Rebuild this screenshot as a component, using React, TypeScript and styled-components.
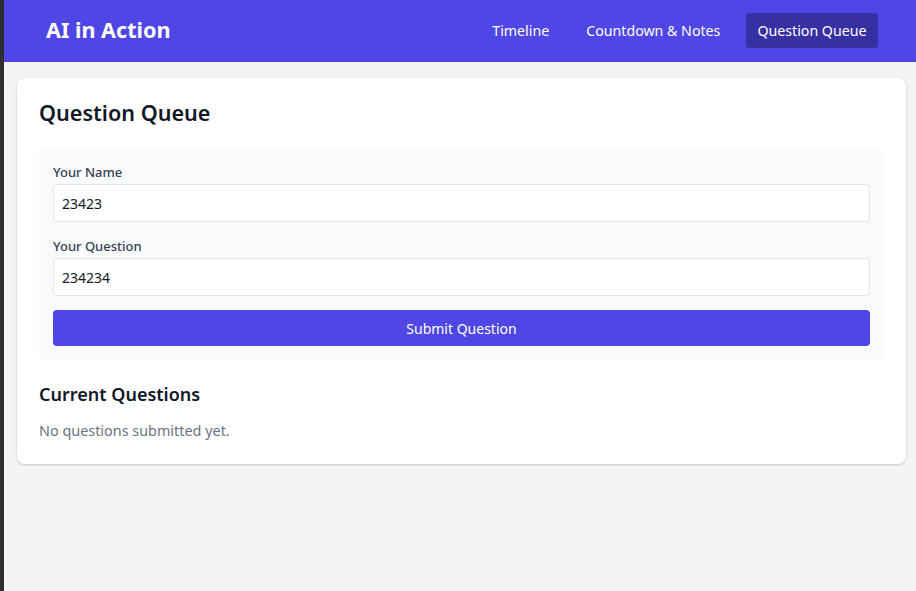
import styled, { createGlobalStyle } from 'styled-components'

const GlobalStyle = createGlobalStyle`
  html, body {
    margin: 0;
    padding: 0;
    height: 100%;
  }
  body {
    font-family: "Noto Sans", "Open Sans", sans-serif;
    background: #f3f4f6;
    border-left: 4px solid #2e2e2e;
    box-sizing: border-box;
  }
  * {
    box-sizing: border-box;
  }
`

const Header = styled.header`
  height: 62px;
  background: #4f46e5;
  display: flex;
  align-items: center;
  justify-content: space-between;
  padding: 0 38px 2px 42px;
`

const Brand = styled.h1`
  margin: 0 0 1px;
  color: #fff;
  font-size: 21.6px;
  font-weight: 700;
  line-height: 30px;
`

const Nav = styled.nav`
  display: flex;
  align-items: center;
  gap: 14px;
`

const NavItem = styled.button<{ $active?: boolean }>`
  border: none;
  font-family: inherit;
  font-size: 14.2px;
  color: #fff;
  padding: 0 11.5px;
  height: 35px;
  border-radius: 4px;
  background: ${({ $active }) => ($active ? '#3730a3' : 'transparent')};
  cursor: pointer;
`

const Main = styled.main`
  padding: 16px 10px 0 13px;
`

const Card = styled.section`
  background: #fff;
  border-radius: 8px;
  box-shadow: 0 1px 3px rgba(0, 0, 0, 0.12), 0 1px 2px rgba(0, 0, 0, 0.08);
  padding: 20px 22px 23px;
`

const Title = styled.h2`
  margin: 0 0 20px;
  font-size: 21.6px;
  font-weight: 600;
  color: #111827;
  line-height: 30px;
`

const Form = styled.form`
  background: #f9fafb;
  border-radius: 8px;
  padding: 15px 14px 14px;
  display: flex;
  flex-direction: column;
`

const Field = styled.div`
  display: flex;
  flex-direction: column;
  margin-bottom: 14px;

  &:first-child {
    margin-bottom: 15px;
  }
`

const Label = styled.label`
  font-size: 13px;
  font-weight: 500;
  color: #374151;
  line-height: 18px;
  margin-bottom: 3px;
`

const Input = styled.input`
  height: 38px;
  border: 1px solid #e5e7eb;
  border-radius: 4px;
  background: #fff;
  padding: 0 8px;
  font-family: inherit;
  font-size: 14px;
  color: #111827;
  outline: none;
`

const Submit = styled.button`
  height: 36px;
  border: none;
  border-radius: 4px;
  background: #4f46e5;
  color: #fff;
  font-family: inherit;
  font-size: 14px;
  cursor: pointer;
`

const SubTitle = styled.h3`
  margin: 21px 0 14px;
  font-size: 18px;
  font-weight: 600;
  color: #111827;
  line-height: 26px;
`

const Empty = styled.p`
  margin: 0;
  font-size: 14.4px;
  color: #6b7280;
  line-height: 20px;
`

export default function App() {
  return (
    <>
      <GlobalStyle />
      <Header>
        <Brand>AI in Action</Brand>
        <Nav>
          <NavItem>Timeline</NavItem>
          <NavItem>Countdown &amp; Notes</NavItem>
          <NavItem $active>Question Queue</NavItem>
        </Nav>
      </Header>
      <Main>
        <Card>
          <Title>Question Queue</Title>
          <Form onSubmit={(e) => e.preventDefault()}>
            <Field>
              <Label>Your Name</Label>
              <Input defaultValue="23423" />
            </Field>
            <Field>
              <Label>Your Question</Label>
              <Input defaultValue="234234" />
            </Field>
            <Submit type="submit">Submit Question</Submit>
          </Form>
          <SubTitle>Current Questions</SubTitle>
          <Empty>No questions submitted yet.</Empty>
        </Card>
      </Main>
    </>
  )
}
